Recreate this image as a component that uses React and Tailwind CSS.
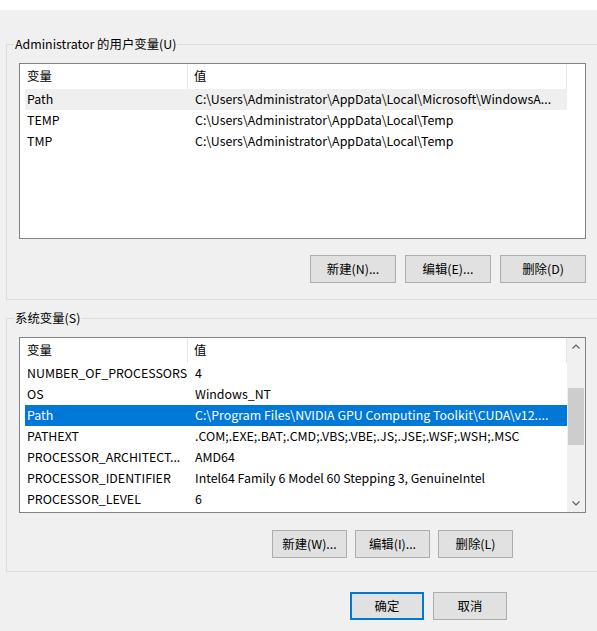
import React from 'react';

const userVars = [
  { name: 'Path', value: 'C:\\Users\\Administrator\\AppData\\Local\\Microsoft\\WindowsA...', hover: true },
  { name: 'TEMP', value: 'C:\\Users\\Administrator\\AppData\\Local\\Temp' },
  { name: 'TMP', value: 'C:\\Users\\Administrator\\AppData\\Local\\Temp' },
];

const sysVars = [
  { name: 'NUMBER_OF_PROCESSORS', value: '4' },
  { name: 'OS', value: 'Windows_NT' },
  { name: 'Path', value: 'C:\\Program Files\\NVIDIA GPU Computing Toolkit\\CUDA\\v12....', selected: true },
  { name: 'PATHEXT', value: '.COM;.EXE;.BAT;.CMD;.VBS;.VBE;.JS;.JSE;.WSF;.WSH;.MSC' },
  { name: 'PROCESSOR_ARCHITECT...', value: 'AMD64' },
  { name: 'PROCESSOR_IDENTIFIER', value: 'Intel64 Family 6 Model 60 Stepping 3, GenuineIntel' },
  { name: 'PROCESSOR_LEVEL', value: '6' },
];

function Row({ item }) {
  let cls = 'bg-transparent text-black';
  if (item.selected) cls = 'bg-[#0078d7] text-white';
  else if (item.hover) cls = 'bg-[#efefef] text-black';
  return (
    <div className={`ml-[5px] w-[542px] h-[21px] flex items-center whitespace-nowrap ${cls}`}>
      <div className="w-[163px] pl-[2px] overflow-hidden">{item.name}</div>
      <div className="flex-1 pl-[7px] overflow-hidden">{item.value}</div>
    </div>
  );
}

function ListView({ rows, scroll }) {
  return (
    <div className="w-[567px] h-[176px] border border-[#828282] bg-white flex">
      <div className="w-[547px]">
        <div className="h-[25px] flex items-center">
          <div className="w-[168px] h-full pl-[7px] flex items-center border-r border-[#e5e5e5]">变量</div>
          <div className="flex-1 h-full pl-[6px] flex items-center border-r border-[#e5e5e5]">值</div>
        </div>
        {rows.map((r, i) => (
          <Row key={i} item={r} />
        ))}
      </div>
      {scroll && (
        <div className="w-[18px] bg-[#f0f0f0] flex flex-col items-center">
          <div className="h-[17px] w-full flex items-center justify-center">
            <svg width="8" height="5" viewBox="0 0 8 5">
              <path d="M0.5 4.5 L4 1 L7.5 4.5" fill="none" stroke="#606060" strokeWidth="1.2" />
            </svg>
          </div>
          <div className="mt-[33px] w-[16px] h-[57px] bg-[#cdcdcd]" />
          <div className="flex-1" />
          <div className="h-[17px] w-full flex items-center justify-center">
            <svg width="8" height="5" viewBox="0 0 8 5">
              <path d="M0.5 0.5 L4 4 L7.5 0.5" fill="none" stroke="#606060" strokeWidth="1.2" />
            </svg>
          </div>
        </div>
      )}
    </div>
  );
}

function Btn({ children, w = 'w-[86px]', primary }) {
  return (
    <div
      className={`${w} h-[28px] flex items-center justify-center bg-[#e1e1e1] ${
        primary ? 'border-2 border-[#0078d7]' : 'border border-[#adadad]'
      }`}
    >
      {children}
    </div>
  );
}

export default function App() {
  return (
    <div className="w-[597px] h-[631px] bg-[#f0f0f0] overflow-hidden text-[12.4px] text-black font-['Microsoft_YaHei','Noto_Sans_CJK_SC',sans-serif]">
      <div className="h-[10px] bg-white" />
      <div className="pl-[6px]">
        <fieldset className="mt-[25px] w-[650px] border-l border-t border-b border-[#dcdcdc] pl-[12px] pt-[10px] pb-[16px]">
          <legend className="-ml-[5px] px-[1px] leading-[18px]">Administrator 的用户变量(U)</legend>
          <ListView rows={userVars} />
          <div className="mt-[16px] pl-[291px] flex gap-[9px]">
            <Btn>新建(N)...</Btn>
            <Btn>编辑(E)...</Btn>
            <Btn>删除(D)</Btn>
          </div>
        </fieldset>
        <fieldset className="mt-[9px] w-[650px] border-l border-t border-b border-[#dcdcdc] pl-[12px] pt-[10px] pb-[13px]">
          <legend className="-ml-[5px] px-[1px] leading-[18px]">系统变量(S)</legend>
          <ListView rows={sysVars} scroll />
          <div className="mt-[17px] pl-[253px] flex gap-[8px]">
            <Btn w="w-[75px]">新建(W)...</Btn>
            <Btn w="w-[75px]">编辑(I)...</Btn>
            <Btn w="w-[75px]">删除(L)</Btn>
          </div>
        </fieldset>
      </div>
      <div className="mt-[20px] pl-[350px] flex gap-[9px]">
        <Btn w="w-[74px]" primary>确定</Btn>
        <Btn w="w-[74px]">取消</Btn>
      </div>
    </div>
  );
}
